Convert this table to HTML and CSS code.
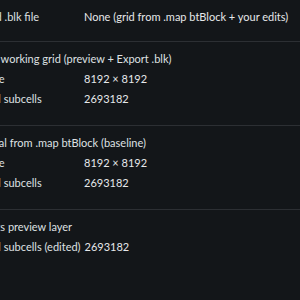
FILE: index.html
```html
<!DOCTYPE html>
<html lang="en">

<head>
    <meta charset="UTF-8">
    <meta name="viewport" content="width=device-width, initial-scale=1.0">
    <title>Grid info</title>
    <link rel="stylesheet" href="styles.css">
</head>

<body>
    <div class="panel">
        <div class="section section-top">
            <div class="row">
                <span class="row-label">Opened .blk file</span>
                <span class="row-value">None (grid from .map btBlock + your edits)</span>
            </div>
        </div>

        <div class="section">
            <div class="section-title">Current working grid (preview + Export .blk)</div>
            <div class="row">
                <span class="row-label">Grid size</span>
                <span class="row-value">8192 × 8192</span>
            </div>
            <div class="row">
                <span class="row-label">Original subcells</span>
                <span class="row-value">2693182</span>
            </div>
        </div>

        <div class="section">
            <div class="section-title">Historical from .map btBlock (baseline)</div>
            <div class="row">
                <span class="row-label">Grid size</span>
                <span class="row-value">8192 × 8192</span>
            </div>
            <div class="row">
                <span class="row-label">Original subcells</span>
                <span class="row-value">2693182</span>
            </div>
        </div>

        <div class="section">
            <div class="section-title">Net edits preview layer</div>
            <div class="row">
                <span class="row-label">Original subcells (edited)</span>
                <span class="row-value">2693182</span>
            </div>
        </div>
    </div>
</body>

</html>
```

FILE: styles.css
```css
body {
    margin: 0;
    height: 100vh;
    overflow: hidden;
    background-color: #131619;
    font-family: 'Lato', sans-serif;
    font-size: 11px;
    color: #dfe1e3;
}

.panel {
    margin-left: -39px;
}

.section {
    border-top: 1px solid #2c2f33;
    padding: 7px 0 16px;
}

.section-top {
    border-top: none;
    padding: 7px 0 14px;
}

.section-title {
    height: 20px;
    line-height: 20px;
    white-space: nowrap;
}

.row {
    display: flex;
    height: 20px;
    line-height: 20px;
    white-space: nowrap;
}

.row-label {
    min-width: 117px;
    padding-left: 2px;
    padding-right: 4px;
}

.row-value {
    color: #e6e8ea;
}
```
